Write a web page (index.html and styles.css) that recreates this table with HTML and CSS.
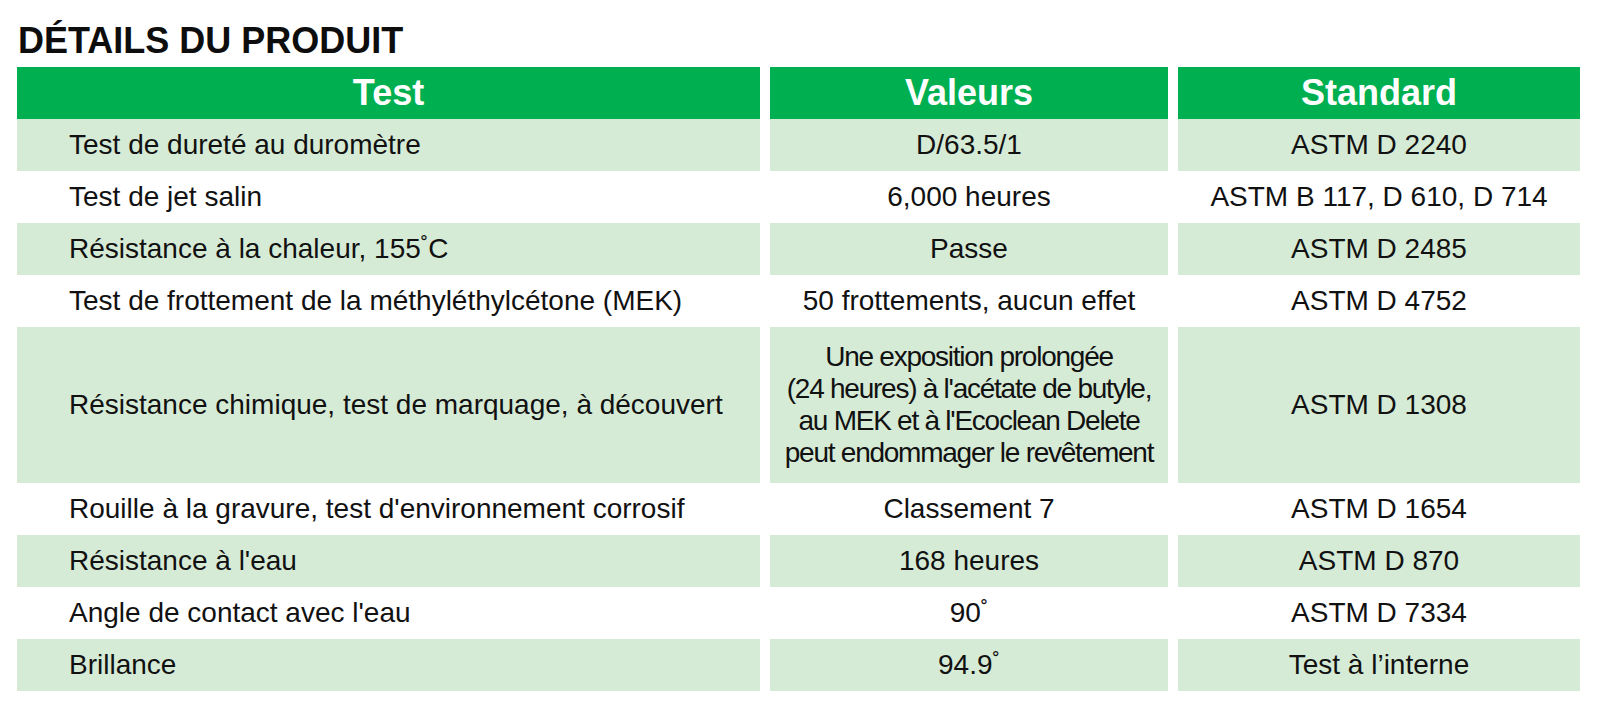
FILE: index.html
```html
<!DOCTYPE html>
<html lang="fr">
<head>
<meta charset="utf-8">
<title>Détails du produit</title>
<link rel="stylesheet" href="styles.css">
</head>
<body>
<div class="page">
  <h1 class="title">DÉTAILS DU PRODUIT</h1>
  <div class="table">
    <div class="cell head">Test</div>
    <div class="cell head">Valeurs</div>
    <div class="cell head">Standard</div>

    <div class="cell first shade">Test de dureté au duromètre</div>
    <div class="cell mid shade">D/63.5/1</div>
    <div class="cell mid shade">ASTM D 2240</div>

    <div class="cell first">Test de jet salin</div>
    <div class="cell mid">6,000 heures</div>
    <div class="cell mid">ASTM B 117, D 610, D 714</div>

    <div class="cell first shade">Résistance à la chaleur, 155<span class="deg">˚</span>C</div>
    <div class="cell mid shade">Passe</div>
    <div class="cell mid shade">ASTM D 2485</div>

    <div class="cell first">Test de frottement de la méthyléthylcétone (MEK)</div>
    <div class="cell mid">50 frottements, aucun effet</div>
    <div class="cell mid">ASTM D 4752</div>

    <div class="cell first shade tall">Résistance chimique, test de marquage, à découvert</div>
    <div class="cell mid shade tall multi">Une exposition prolongée<br>(24 heures) à l'acétate de butyle,<br>au MEK et à l'Ecoclean Delete<br>peut endommager le revêtement</div>
    <div class="cell mid shade tall">ASTM D 1308</div>

    <div class="cell first">Rouille à la gravure, test d'environnement corrosif</div>
    <div class="cell mid">Classement 7</div>
    <div class="cell mid">ASTM D 1654</div>

    <div class="cell first shade">Résistance à l'eau</div>
    <div class="cell mid shade">168 heures</div>
    <div class="cell mid shade">ASTM D 870</div>

    <div class="cell first">Angle de contact avec l'eau</div>
    <div class="cell mid">90<span class="deg">˚</span></div>
    <div class="cell mid">ASTM D 7334</div>

    <div class="cell first shade">Brillance</div>
    <div class="cell mid shade">94.9<span class="deg">˚</span></div>
    <div class="cell mid shade">Test à l’interne</div>
  </div>
</div>
</body>
</html>
```

FILE: styles.css
```css
html, body {
  margin: 0;
  padding: 0;
  background: #ffffff;
}

.page {
  padding: 21px 0 0 17px;
  font-family: "Liberation Sans", Arial, Helvetica, sans-serif;
  color: #111111;
}

.title {
  margin: 0 0 6px 1px;
  font-size: 36px;
  line-height: 40px;
  font-weight: 700;
  color: #0d0d0d;
  letter-spacing: 0;
}

.table {
  display: grid;
  grid-template-columns: 743px 398px 402px;
  column-gap: 10px;
}

.cell {
  display: flex;
  align-items: center;
  height: 52px;
  font-size: 28px;
  line-height: 32px;
  white-space: nowrap;
}

.cell.head {
  justify-content: center;
  background: #00b050;
  color: #ffffff;
  font-weight: 700;
  font-size: 36px;
}

.cell.shade {
  background: #d6ebd6;
}

.cell.first {
  padding-left: 52px;
}

.cell.mid {
  justify-content: center;
  text-align: center;
}

.cell.tall {
  height: 156px;
}

.cell.multi {
  letter-spacing: -1.25px;
}

.deg {
  font-size: 0.8em;
  position: relative;
  top: -0.15em;
}
```
